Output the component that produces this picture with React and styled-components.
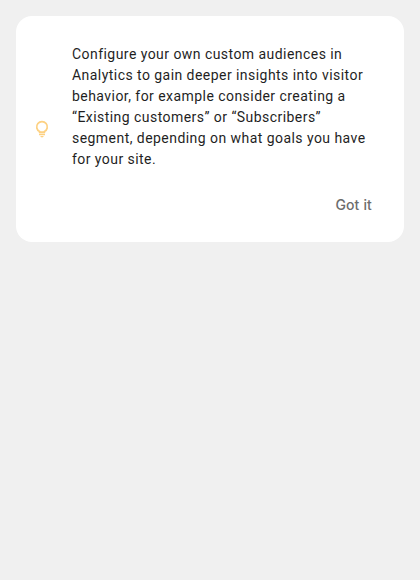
import React from "react";
import styled, { createGlobalStyle } from "styled-components";

const GlobalStyle = createGlobalStyle`
  body { margin: 0; background: #f0f0f0; }
`;
const Page = styled.main`
  padding: 16px;
  font-family: Roboto, sans-serif;
`;
const Card = styled.section`
  box-sizing: border-box;
  display: grid;
  grid-template-columns: 20px 1fr;
  column-gap: 20px;
  align-items: center;
  height: 226px;
  padding: 0 32px 0 16px;
  border-radius: 16px;
  background: #fff;
`;
const Bulb = styled.svg`
  display: block;
  width: 20px;
  height: 20px;
`;
const Content = styled.div`
  display: flex;
  flex-direction: column;
`;
const Message = styled.p`
  margin: 0;
  font-size: 14px;
  line-height: 21px;
  letter-spacing: 0.45px;
  color: #1f1f1f;
`;
const Line = styled.span`
  display: block;
  white-space: nowrap;
`;
const Dismiss = styled.button`
  align-self: flex-end;
  margin: 24px 0 0;
  padding: 0;
  border: 0;
  background: none;
  font: 500 14px/21px Inter, sans-serif;
  letter-spacing: 0.15px;
  color: #6c6c6c;
`;
const lines = [
  "Configure your own custom audiences in",
  "Analytics to gain deeper insights into visitor",
  "behavior, for example consider creating a",
  "“Existing customers” or “Subscribers”",
  "segment, depending on what goals you have",
  "for your site.",
];

export default function App() {
  return (
    <Page>
      <GlobalStyle />
      <Card>
        <Bulb viewBox="0 0 20 20" aria-hidden="true">
          <g fill="none" stroke="#fdd182" strokeWidth="1.7">
            <path d="M7.6 13.2V12.6A5.3 5.3 0 1 1 12.4 12.6V13.2Z" />
            <path d="M7 15.4H13" />
          </g>
          <path d="M8.3 17H11.7A1.7 1.5 0 0 1 8.3 17Z" fill="#fdd182" />
        </Bulb>
        <Content>
          <Message>{lines.map((l) => <Line key={l}>{l}</Line>)}</Message>
          <Dismiss>Got it</Dismiss>
        </Content>
      </Card>
    </Page>
  );
}
